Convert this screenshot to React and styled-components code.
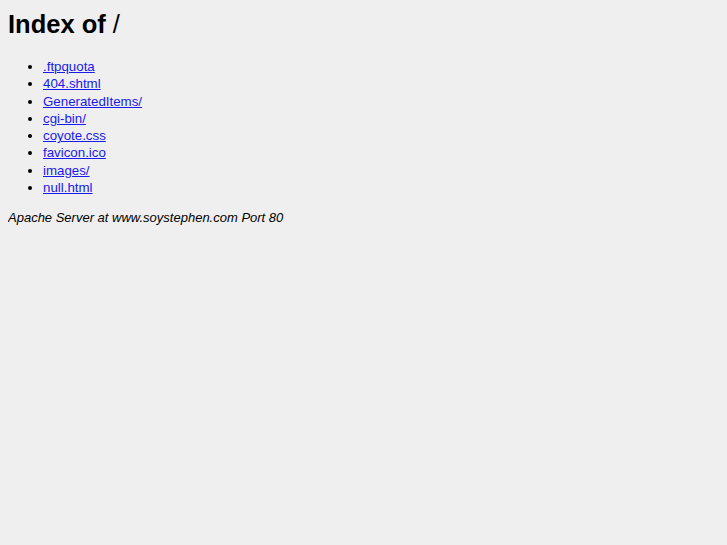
import React from 'react';
import styled, { createGlobalStyle } from 'styled-components';

const Global = createGlobalStyle`
  html, body {
    background: #efefef;
  }
  body {
    margin: 8px;
    font-family: "Liberation Sans", Arial, Helvetica, sans-serif;
    font-size: 13.3px;
    color: #000;
  }
`;

const Title = styled.h1`
  margin: 0 0 18px;
  font-size: 25.5px;
  font-weight: bold;
  line-height: 32px;
`;

const Slash = styled.span`
  font-weight: normal;
`;

const List = styled.ul`
  margin: 0 0 13px;
  padding-left: 35px;
  list-style: disc;
`;

const Item = styled.li`
  line-height: 17.3px;
`;

const Link = styled.a`
  color: #1a1aee;
  text-decoration: underline;
`;

const Address = styled.address`
  font-style: italic;
  font-size: 13px;
  line-height: 17px;
`;

const files = [
  '.ftpquota',
  '404.shtml',
  'GeneratedItems/',
  'cgi-bin/',
  'coyote.css',
  'favicon.ico',
  'images/',
  'null.html'
];

export default function App() {
  return (
    <>
      <Global />
      <Title>
        Index of <Slash>/</Slash>
      </Title>
      <List>
        {files.map((name) => (
          <Item key={name}>
            <Link href={name}>{name}</Link>
          </Item>
        ))}
      </List>
      <Address>Apache Server at www.soystephen.com Port 80</Address>
    </>
  );
}
